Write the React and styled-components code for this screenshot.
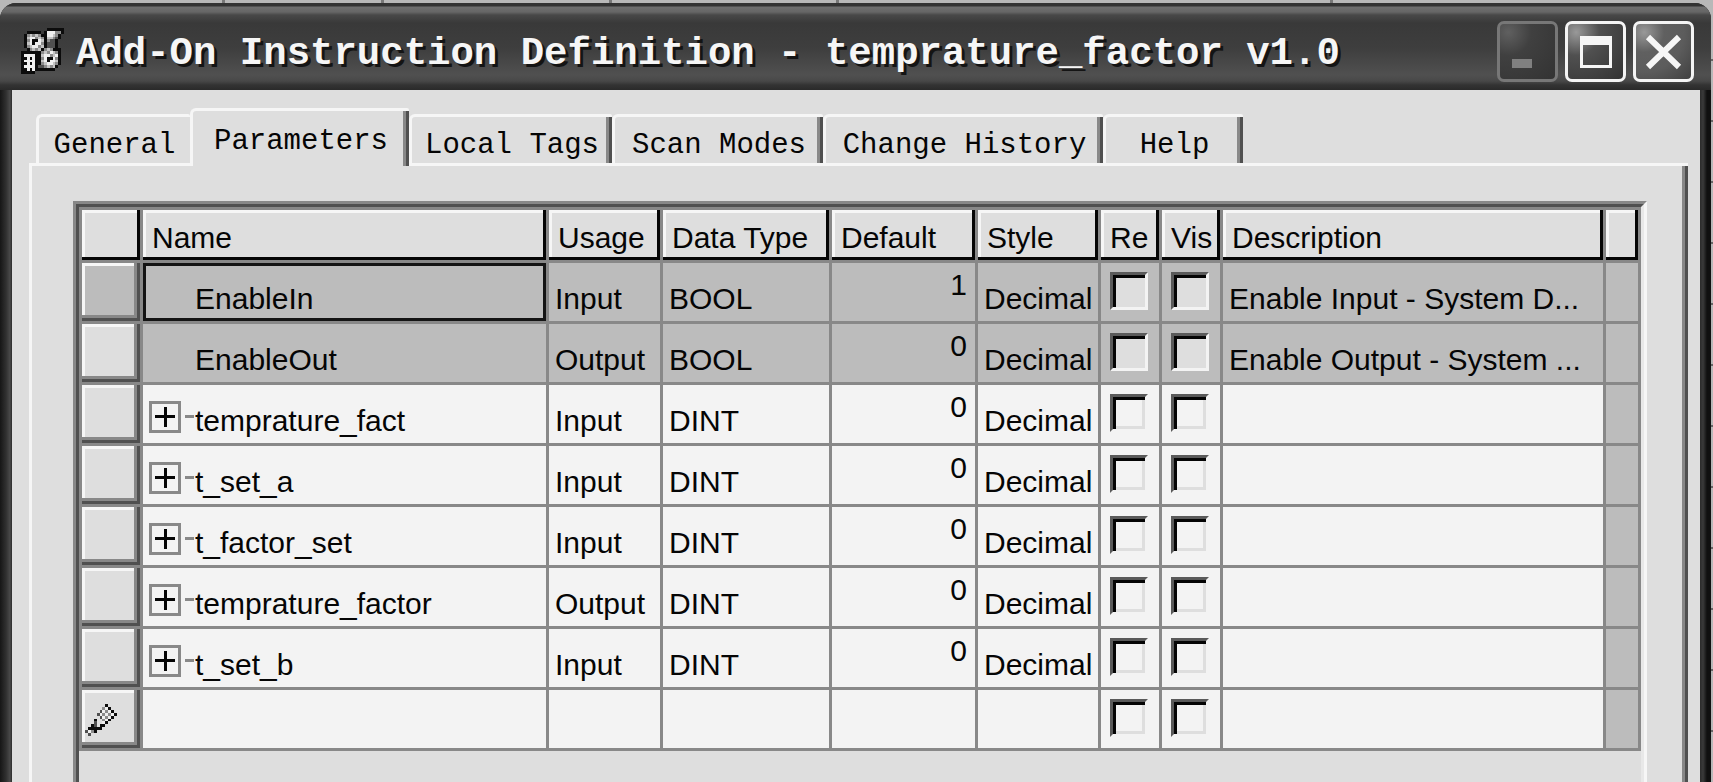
import React, { useState } from 'react';
import styled, { createGlobalStyle } from 'styled-components';

const GlobalStyle = createGlobalStyle`
  * {
    box-sizing: border-box;
  }
  body {
    margin: 0;
    background: #c0c0c0;
  }
  button, input {
    margin: 0;
    padding: 0;
    font: inherit;
    color: inherit;
  }
`;

// strip of the worksheet that shows behind the dialog
const Desktop = styled.div`
  display: flex;
  min-height: 100vh;
  padding: 3px 2px 0 0;
  background:
    linear-gradient(#777, #777) 222px 0 / 3px 3px no-repeat,
    linear-gradient(#777, #777) 381px 0 / 3px 3px no-repeat,
    linear-gradient(#777, #777) 609px 0 / 3px 3px no-repeat,
    linear-gradient(#777, #777) 836px 0 / 3px 3px no-repeat,
    linear-gradient(#777, #777) 1330px 0 / 3px 3px no-repeat,
    repeating-linear-gradient(#b8b8b8 0 59px, #666 59px 61px);
`;

const Window = styled.section`
  flex: 1;
  min-width: 0;
  display: flex;
  flex-direction: column;
  border-radius: 16px 16px 0 0;
  overflow: hidden;
  background: linear-gradient(90deg, #161616 0, #303030 6px, #4a4a4a 10px, #2c2c2c 12px, #2c2c2c calc(100% - 11px), #3a3a3a calc(100% - 8px), #101010 calc(100% - 4px), #101010 100%);
`;

const TitleBar = styled.header`
  display: flex;
  align-items: center;
  height: 87px;
  padding: 9px 17px 0 21px;
  background: linear-gradient(#333 0 3px, #6f6f6f 4px, #666 9px, #484848 12px, #393939 20px, #3e3e3e 45px, #505050 72px, #484848 78px, #333 82px, #2a2a2a 100%);
`;

const Title = styled.h1`
  flex: 1;
  margin: 0;
  padding: 6px 0 0 12px;
  font: bold 39px/48px "Liberation Mono", "Courier New", monospace;
  color: #f6f6f6;
  text-shadow: 3px 3px 0 #141414;
  white-space: nowrap;
`;

const WindowButtons = styled.div`
  display: flex;
  gap: 7px;
`;

const WindowButton = styled.button`
  width: 61px;
  height: 61px;
  border: 3px solid ${(p) => (p.disabled ? '#777' : '#f4f4f4')};
  border-radius: 7px;
  color: ${(p) => (p.disabled ? '#808080' : '#f6f6f6')};
  background: ${(p) =>
    p.$close
      ? 'radial-gradient(circle at 15% 15%, #999 0, #606060 30%, #5c5c5c 60%, #404040 100%)'
      : p.disabled
        ? 'radial-gradient(circle at 15% 15%, #606060 0, #404040 35%, #333 100%)'
        : 'radial-gradient(circle at 15% 15%, #999 0, #505050 35%, #333 100%)'};

  svg {
    display: block;
    width: 55px;
    height: 55px;
  }
`;

const Body = styled.main`
  flex: 1;
  display: flex;
  flex-direction: column;
  margin: 0 11px 0 12px;
  padding: 18px 12px 0 17px;
  background: #dedede;
`;

const TabList = styled.div`
  display: flex;
  align-items: flex-end;
  height: 55px;
  padding-left: 7px;
  font: 29px/32px "Liberation Mono", "Courier New", monospace;
  color: #050505;
`;

const Tab = styled.button`
  width: ${(p) => p.$width}px;
  height: 49px;
  padding-top: 12px;
  border: 0 solid #f6f6f6;
  border-width: 3px 0 0 3px;
  border-radius: 6px 2px 0 0;
  background: ${(p) => (p.$divided ? 'linear-gradient(90deg, #888 50%, #505050 50%) right / 6px 100% no-repeat, #dedede' : '#dedede')};
  white-space: nowrap;

  &[aria-selected='true'] {
    height: 58px;
    margin-bottom: -3px;
    padding-bottom: 6px;
    z-index: 1;
  }
`;

const Panel = styled.div`
  flex: 1;
  display: flex;
  padding: 35px 41px 0 41px;
  border: 0 solid #f6f6f6;
  border-width: 3px 0 0 3px;
  background: linear-gradient(90deg, #888 50%, #505050 50%) right / 6px 100% no-repeat, #dedede;
`;

const Grid = styled.div`
  flex: 1;
  min-width: 0;
  border-top: 3px solid #888;
  border-left: 3px solid #888;
  border-right: 3px solid #f6f6f6;
`;

const GridInner = styled.div`
  height: 100%;
  border-top: 3px solid #505050;
  border-left: 3px solid #505050;
  border-right: 3px solid #e8e8e8;
`;

const Table = styled.table`
  width: 100%;
  table-layout: fixed;
  border-collapse: separate;
  border-spacing: 0;
  border-top: 3px solid #888;
  border-left: 3px solid #888;
  font: 30px/44px "Liberation Sans", Arial, sans-serif;
  color: #050505;
`;

const HeadCell = styled.th`
  height: 53px;
  padding: 6px 0 0 9px;
  overflow: hidden;
  vertical-align: top;
  text-align: left;
  font-weight: normal;
  white-space: nowrap;
  border-right: 3px solid #888;
  border-bottom: 3px solid #888;
  background: #dedede;
  box-shadow: inset -3px -3px 0 #050505, inset 3px 3px 0 #f6f6f6;
`;

const RowHead = styled.th`
  height: 61px;
  padding: 14px 0 0 3px;
  vertical-align: top;
  text-align: left;
  border-right: 3px solid #888;
  border-bottom: 3px solid #888;
  background: ${(p) => (p.$current ? '#bcbcbc' : '#dedede')};
  box-shadow: inset -3px -3px 0 #505050, inset -6px -6px 0 #888, inset 3px 3px 0 #f6f6f6;
`;

const Cell = styled.td`
  height: 61px;
  padding: ${(p) => (p.$value ? '0 8px 0 0' : '14px 0 0 6px')};
  overflow: hidden;
  vertical-align: top;
  text-align: ${(p) => (p.$value ? 'right' : 'left')};
  white-space: nowrap;
  border-right: 3px solid #888;
  border-bottom: 3px solid #888;
  background: ${(p) => (p.$locked ? '#bcbcbc' : '#f3f3f3')};
  box-shadow: ${(p) => (p.$selected ? 'inset 0 0 0 3px #141414' : 'none')};
`;

const CheckCell = styled(Cell)`
  padding: 9px 0 0 9px;
`;

const Check = styled.input`
  appearance: none;
  display: block;
  width: 38px;
  height: 38px;
  border: 3px solid;
  border-color: #5a5a5a #f3f3f3 #f3f3f3 #5a5a5a;
  background: ${(p) => (p.disabled ? '#dedede' : '#f3f3f3')};
  box-shadow: inset 3px 3px 0 #050505, inset -3px -3px 0 #dedede;
`;

const NameCell = styled(Cell)`
  padding: 0 0 0 6px;
`;

const TreeItem = styled.div`
  display: grid;
  grid-template-columns: 32px 12px 1fr;
  column-gap: 1px;
  align-items: start;
`;

const Expander = styled.button`
  display: block;
  width: 32px;
  height: 32px;
  margin-top: 16px;
  border: 3px solid #888;
  background: #f3f3f3;

  svg {
    display: block;
    width: 26px;
    height: 26px;
  }
`;

const Branch = styled.span`
  width: 9px;
  height: 3px;
  margin: 30px 0 0 3px;
  background: #888;
`;

const ParamName = styled.span`
  grid-column: 3;
  padding-top: 14px;
`;

const PixelArt = styled.svg`
  display: block;
  flex: none;
  width: ${(p) => p.$size}px;
`;

const shades = { k: '#0c0c0c', w: '#f0f0f0', l: '#c4c4c4', g: '#8c8c8c', d: '#505050' };

const appIcon = [
  '.........kkkkkk',
  '..kkkkk.kwwwggk',
  '.kglglgkkwwlgk.',
  '.klwwglgkllgdk.',
  '.kgwkkwlkgddk..',
  '.klwkwwgkdddk..',
  '.kglwwglkdddk..',
  '..kglglkglgkkk.',
  'kkkkkkkglgwlgk.',
  'kwwwwkklwwglwk.',
  'kkwkwkkgwkkwgk.',
  'kwwwwkklwkwwlk.',
  'kkwkwkkglwwlgk.',
  'kwwwwkddglglk..',
  'kkwkwkkkkkkk...',
  'kkkkk..........',
];

const pencilIcon = [
  '.......k...',
  '......gwk..',
  '.....dwgwk.',
  '....dwgwgwk',
  '.....dwgwk.',
  '...k..gwk..',
  '...d..wk...',
  '..kd.kk....',
  '.kkkkk.....',
  'dwgk.......',
  '.d.........',
];

const Pixels = ({ map, size }) => (
  <PixelArt $size={size} viewBox={`0 0 ${map[0].length} ${map.length}`} shapeRendering="crispEdges" aria-hidden="true">
    {map.map((line, y) =>
      [...line].map((c, x) => c !== '.' && <rect key={`${x}-${y}`} x={x} y={y} width="1" height="1" fill={shades[c]} />)
    )}
  </PixelArt>
);

const tabs = [
  { label: 'General', width: 154 },
  { label: 'Parameters', width: 219, divided: true },
  { label: 'Local Tags', width: 203, divided: true },
  { label: 'Scan Modes', width: 211, divided: true },
  { label: 'Change History', width: 280, divided: true },
  { label: 'Help', width: 140, divided: true },
];

const columns = [
  { label: '', width: 61 },
  { label: 'Name', width: 406 },
  { label: 'Usage', width: 114 },
  { label: 'Data Type', width: 169 },
  { label: 'Default', width: 146 },
  { label: 'Style', width: 123 },
  { label: 'Re', width: 61 },
  { label: 'Vis', width: 61 },
  { label: 'Description' },
  { label: '', width: 35 },
];

const params = [
  { name: 'EnableIn', usage: 'Input', type: 'BOOL', value: 1, style: 'Decimal', description: 'Enable Input - System D...', locked: true },
  { name: 'EnableOut', usage: 'Output', type: 'BOOL', value: 0, style: 'Decimal', description: 'Enable Output - System ...', locked: true },
  { name: 'temprature_fact', usage: 'Input', type: 'DINT', value: 0, style: 'Decimal' },
  { name: 't_set_a', usage: 'Input', type: 'DINT', value: 0, style: 'Decimal' },
  { name: 't_factor_set', usage: 'Input', type: 'DINT', value: 0, style: 'Decimal' },
  { name: 'temprature_factor', usage: 'Output', type: 'DINT', value: 0, style: 'Decimal' },
  { name: 't_set_b', usage: 'Input', type: 'DINT', value: 0, style: 'Decimal' },
  { name: '', isNew: true },
];

const ParamRow = ({ param, current }) => {
  const { name, locked } = param;

  return (
    <tr>
      <RowHead scope="row" $current={current} aria-label={name || 'New parameter'}>
        {param.isNew && <Pixels map={pencilIcon} size={32} />}
      </RowHead>
      <NameCell $locked={locked} $selected={current}>
        <TreeItem>
          {!locked && name && (
            <>
              <Expander aria-label={`Expand ${name}`}>
                <svg viewBox="0 0 26 26" stroke="#050505" strokeWidth="3">
                  <path d="M3 12.5h20M13.5 3v20" />
                </svg>
              </Expander>
              <Branch />
            </>
          )}
          <ParamName>{name}</ParamName>
        </TreeItem>
      </NameCell>
      <Cell $locked={locked}>{param.usage}</Cell>
      <Cell $locked={locked}>{param.type}</Cell>
      <Cell $locked={locked} $value>{param.value}</Cell>
      <Cell $locked={locked}>{param.style}</Cell>
      <CheckCell $locked={locked}>
        <Check type="checkbox" disabled={locked} aria-label={`Required ${name}`} />
      </CheckCell>
      <CheckCell $locked={locked}>
        <Check type="checkbox" disabled={locked} aria-label={`Visible ${name}`} />
      </CheckCell>
      <Cell $locked={locked}>{param.description}</Cell>
      <Cell $locked />
    </tr>
  );
};

function App() {
  const [activeTab, setActiveTab] = useState('Parameters');

  return (
    <Desktop>
      <GlobalStyle />
      <Window>
        <TitleBar>
          <Pixels map={appIcon} size={43} />
          <Title>Add-On Instruction Definition - temprature_factor v1.0</Title>
          <WindowButtons>
            <WindowButton disabled aria-label="Minimize">
              <svg viewBox="0 0 55 55" fill="currentColor">
                <path d="M12 35h20v9H12z" />
              </svg>
            </WindowButton>
            <WindowButton aria-label="Maximize">
              <svg viewBox="0 0 55 55" fill="currentColor">
                <path fillRule="evenodd" d="M12 12h32v32H12zM15 21v20h26V21z" />
              </svg>
            </WindowButton>
            <WindowButton $close aria-label="Close">
              <svg viewBox="0 0 55 55" stroke="currentColor" strokeWidth="6">
                <path d="M12 13L43 43M43 13L12 43" />
              </svg>
            </WindowButton>
          </WindowButtons>
        </TitleBar>
        <Body>
          <TabList role="tablist">
            {tabs.map((tab) => (
              <Tab
                key={tab.label}
                role="tab"
                aria-selected={activeTab === tab.label}
                $width={tab.width}
                $divided={tab.divided}
                onClick={() => setActiveTab(tab.label)}
              >
                {tab.label}
              </Tab>
            ))}
          </TabList>
          <Panel role="tabpanel">
            <Grid>
              <GridInner>
                <Table>
                  <colgroup>
                    {columns.map((col, i) => (
                      <col key={i} width={col.width} />
                    ))}
                  </colgroup>
                  <thead>
                    <tr>
                      {columns.map((col, i) => (
                        <HeadCell key={i} scope="col">{col.label}</HeadCell>
                      ))}
                    </tr>
                  </thead>
                  <tbody>
                    {params.map((param, i) => (
                      <ParamRow key={i} param={param} current={i === 0} />
                    ))}
                  </tbody>
                </Table>
              </GridInner>
            </Grid>
          </Panel>
        </Body>
      </Window>
    </Desktop>
  );
}

export default App;
